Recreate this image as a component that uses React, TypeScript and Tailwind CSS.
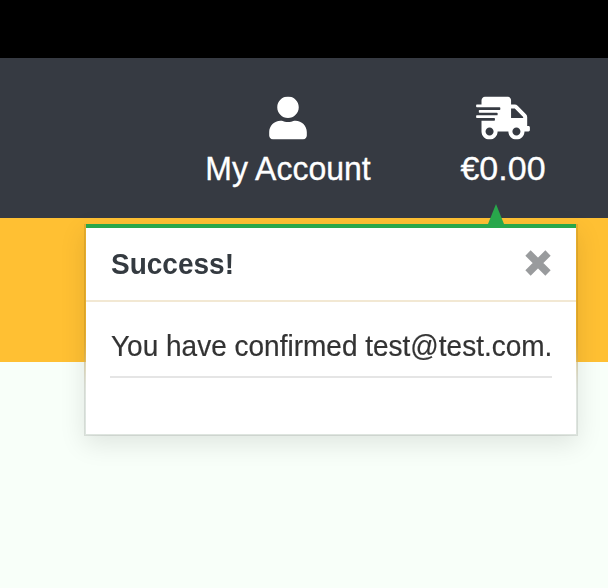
import { FaShippingFast, FaUser } from 'react-icons/fa';

function NavItem({ icon, label, className, labelClass }: { icon: React.ReactNode; label: string; className: string; labelClass: string }) {
  return (
    <a className={`flex flex-col items-center text-white ${className}`}>
      {icon}
      <span className={`mt-[10px] whitespace-nowrap leading-[38px] [-webkit-text-stroke:0.3px_white] ${labelClass}`}>{label}</span>
    </a>
  );
}

function SuccessPopup() {
  return (
    <div className="absolute left-[84px] top-[224px] h-[212px] w-[494px] border-2 border-t-0 border-black/10 bg-white bg-clip-padding shadow-[0_8px_24px_rgba(0,0,0,0.1)] backdrop-blur-[16px]">
      <svg className="absolute -top-[20px] left-[402px]" width="16" height="20" viewBox="0 0 16 20">
        <path d="M8 0 16 20H0Z" fill="#28a74b" />
      </svg>
      <div className="flex h-[78px] items-center justify-between border-b-2 border-t-4 border-b-[#f2e8d3] border-t-[#28a74b] px-6">
        <h2 className="mt-[2px] scale-y-[1.04] pl-px text-[28px] font-bold leading-8 text-[#343a40]">Success!</h2>
        <svg className="-mt-[2px]" width="27" height="27" viewBox="0 0 27 27" fill="none" stroke="#999b9d" strokeWidth="7.5">
          <path d="m3 3 20 20M23 3l-20 20" />
        </svg>
      </div>
      <div className="mx-6 mt-[28px] h-[48px] border-b-2 border-[#e5e5e5]">
        <p className="scale-y-[1.03] whitespace-nowrap pl-px text-[28px] leading-[34px] text-[#333] [-webkit-text-stroke:0.2px_#333]">
          You have confirmed test@test.com.
        </p>
      </div>
    </div>
  );
}

export default function App() {
  return (
    <main className="relative h-[588px] w-[608px] overflow-hidden bg-[#f8fff9] font-['Liberation_Sans',Arial,sans-serif]">
      <div className="h-[58px] bg-black" />
      <header className="flex h-[160px] bg-[#363a42] pt-[38px]">
        <NavItem className="ml-[188px] w-[200px]" labelClass="text-[32px] scale-y-[1.06]" icon={<FaUser className="h-[43px] w-[38px] translate-y-[0.5px]" />} label="My Account" />
        <NavItem className="ml-[35px] w-[160px]" labelClass="text-[34px]" icon={<FaShippingFast className="h-[43px] w-[54px] translate-y-[0.5px]" />} label="€0.00" />
      </header>
      <div className="h-[144px] bg-[#ffc033]" />
      <SuccessPopup />
    </main>
  );
}
